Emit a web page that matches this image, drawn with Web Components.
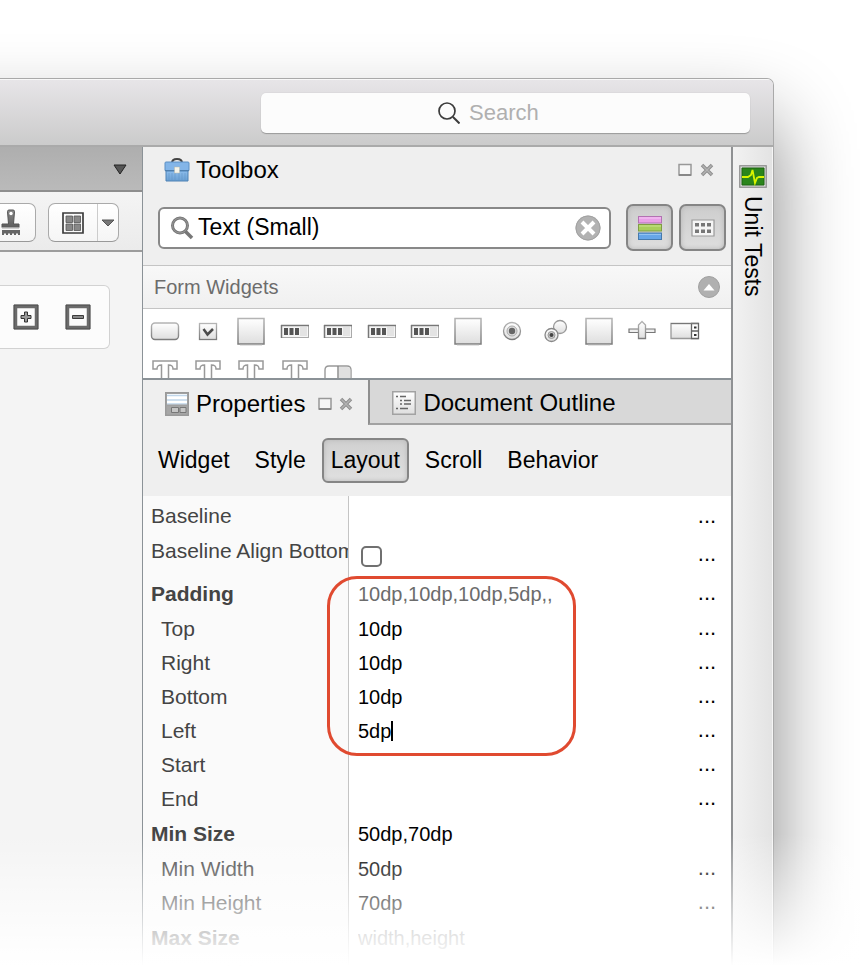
<!DOCTYPE html>
<html lang="en">
<head>
<meta charset="utf-8">
<title>Designer</title>
<style>
  body { margin: 0; background: #fff; font-family: "Liberation Sans", Arial, sans-serif; color: #000; }
</style>
</head>
<body>
<app-window>
  <title-bar slot="title"></title-bar>
  <canvas-pane slot="left"></canvas-pane>
  <tool-box></tool-box>
  <tab-strip></tab-strip>
  <category-bar></category-bar>
  <property-grid>
    <prop-row label="Baseline" kind="first"></prop-row>
    <prop-row label="Baseline Align Bottom" kind="check"></prop-row>
    <call-out>
      <prop-row label="Padding" kind="group" value="10dp,10dp,10dp,5dp,," muted></prop-row>
      <prop-row label="Top" value="10dp"></prop-row>
      <prop-row label="Right" value="10dp"></prop-row>
      <prop-row label="Bottom" value="10dp"></prop-row>
      <prop-row label="Left" value="5dp" editing></prop-row>
    </call-out>
    <prop-row label="Start"></prop-row>
    <prop-row label="End"></prop-row>
    <prop-row label="Min Size" kind="group" value="50dp,70dp" plain></prop-row>
    <prop-row label="Min Width" value="50dp"></prop-row>
    <prop-row label="Min Height" value="70dp"></prop-row>
    <prop-row label="Max Size" kind="group" hint="width,height" plain></prop-row>
    <prop-row label="Max Width" plain></prop-row>
  </property-grid>
  <side-strip slot="right">Unit Tests</side-strip>
</app-window>

<script>
const RESET = `
  :host, *, *::before, *::after { box-sizing: border-box; }
  button, input { font: inherit; color: inherit; margin: 0; padding: 0; border: 0; background: none; outline: 0; }
`;
const define = (name, html, setup) => {
  const tpl = document.createElement('template');
  tpl.innerHTML = html;
  customElements.define(name, class extends HTMLElement {
    constructor() {
      super();
      this.attachShadow({ mode: 'open' }).append(tpl.content.cloneNode(true));
    }
    connectedCallback() { if (setup) setup(this, this.shadowRoot); }
  });
};

const DEFS = `<defs>
  <linearGradient id="g" x1="0" y1="0" x2="0" y2="1"><stop offset="0" stop-color="#fff"/><stop offset="1" stop-color="#dedede"/></linearGradient>
  <linearGradient id="s" x1="0" y1="0" x2="0" y2="1"><stop offset="0" stop-color="#b4b4b4"/><stop offset="1" stop-color="#7c7c7c"/></linearGradient>
  <linearGradient id="d" x1="0" y1="0" x2="0" y2="1"><stop offset="0" stop-color="#8a8a8a"/><stop offset="1" stop-color="#5a5a5a"/></linearGradient>
  <linearGradient id="b" x1="0" y1="0" x2="0" y2="1"><stop offset="0" stop-color="#8dbdec"/><stop offset="1" stop-color="#6a9fd2"/></linearGradient>
</defs>`;
const SQUARE = '<rect x="2" y="2.500" width="26" height="25.500" fill="url(#g)" stroke="url(#s)" stroke-width="1.500"/><path d="M4 29.300h22" stroke="#ddd"/>';
const BAR = '<rect x="1.500" y="9.500" width="27" height="12" fill="#f6f6f6" stroke="#aaa"/><path d="M1 9.500h28M1.500 9v13" stroke="#777" stroke-width="1.500"/><path d="M20 11h7v9h-7z" fill="#e3e3e3"/><path d="M4 12h4v7H4zM9.500 12h4v7h-4zM15 12h4v7h-4z" fill="#555"/>';
const TEE = '<path d="M3 5h24v8h-4c0-3-1-4-4.500-4v18h-7V9C8 9 7 10 7 13H3z" fill="#fff" stroke="#999" stroke-width="1.500"/>';
const ICONS = {
  search: [22, 22, '<circle cx="9" cy="9" r="8" fill="none" stroke="#3c3c3c" stroke-width="1.700"/><path d="M15 15l6.500 6.500" stroke="#3c3c3c" stroke-width="2"/>'],
  find: [24, 24, '<path d="M15 15l7 7" stroke="#777" stroke-width="3.500"/><circle cx="10" cy="9.500" r="7.500" fill="#fff" stroke="#777" stroke-width="3"/><circle cx="10" cy="9.500" r="7.500" fill="none" stroke="#999" stroke-width="1"/>'],
  clear: [26, 26, '<circle cx="13" cy="13" r="12.500" fill="#b2b2b2"/><circle cx="13" cy="13" r="12" fill="none" stroke="#a2a2a2"/><path d="M7 7l12 12M19 7L7 19" stroke="#fff" stroke-width="4"/>'],
  toolbox: [26, 24, '<path d="M8 5c0-3 2-4 5-4s5 1 5 4" fill="none" stroke="#444" stroke-width="2"/><rect x="1" y="4" width="24" height="9" rx="1" fill="#83b5e8" stroke="#5b8fc4"/><path d="M2 13h22v10H2z" fill="url(#b)" stroke="#4f82b5"/><path d="M5 15v7M8 15v7M11 15v7M15 15v7M18 15v7M21 15v7" stroke="#5b90c4" stroke-opacity=".5"/><path d="M1 12.500h24" stroke="#4f7fae"/><rect x="10.500" y="9" width="5" height="6" fill="#f5f4ea" stroke="#b9b9a9" stroke-width=".500"/>'],
  dock: [14, 14, '<path d="M1 1.500h12v10.500H1z" fill="#f6f6f6" stroke="#989898" stroke-width="1.500"/><path d="M1 12h12" stroke="#888" stroke-width="2"/>'],
  close: [14, 14, '<path d="M2 2l10 10M12 2L2 12" stroke="#8e8e8e" stroke-width="3.500"/><path d="M2.500 2.500l9 9M11.500 2.500l-9 9" stroke="#b2b2b2" stroke-width="1.500"/>'],
  layers: [26, 26, '<rect x="1.500" y="1.500" width="23" height="6.500" fill="#e9a0e8" stroke="#b272b2"/><path d="M2 3h22" stroke="#f6c8f5"/><rect x="1.500" y="9.500" width="23" height="6.500" fill="#a9cf5c" stroke="#7f9d42"/><path d="M2 11h22" stroke="#c8e48d"/><rect x="1.500" y="18" width="23" height="6.500" fill="#66a6e8" stroke="#4679ac"/><path d="M2 19.500h22" stroke="#93c3f1"/>'],
  cells: [24, 18, '<path d="M1 1h22v16H1z" fill="#f5f5f5" stroke="#999" stroke-width="1.200"/><path d="M4 4h4v3.500H4zM10 4h4v3.500h-4zM16 4h4v3.500h-4zM4 10.500h4V14H4zM10 10.500h4V14h-4zM16 10.500h4V14h-4z" fill="#777"/>'],
  up: [22, 22, '<circle cx="11" cy="11" r="10.500" fill="#b0b0b0" stroke="#a0a0a0"/><path d="M5.500 14.500L11 8l5.500 6.500z" fill="#fff"/>'],
  down: [14, 12, '<path d="M1 2h12L7 11z" fill="#555" stroke="#222"/>'],
  drop: [14, 8, '<path d="M1 1h12L7 7z" fill="#777" stroke="#555"/>'],
  brush: [20, 27, '<path d="M6.500 2.500Q6.500 1 8 1h4q1.500 0 1.500 1.500L12.500 15H18v4H1v-4h6.500z" fill="url(#d)" stroke="#555"/><circle cx="10" cy="4.500" r="1.700" fill="#fff"/><path d="M0 19h20" stroke="#f5f5f5"/><path d="M1 21h18v5h-2v-1.500h-2V26h-2v-1.500h-2V26H9v-1.500H7V26H5v-1.500H3V26H1z" fill="#666"/>'],
  grid: [22, 22, '<path d="M1 1h20v20H1z" fill="#fafafa" stroke="#3c3c3c" stroke-width="1.700"/><path d="M4 4h6.500v6.500H4zM12 4h6.500v6.500H12zM4 12h6.500v6.500H4zM12 12h6.500v6.500H12z" fill="#888" stroke="#555" stroke-width=".800"/>'],
  plus: [26, 26, '<path d="M2.500 2.500h21v21h-21z" fill="#fcfcfc" stroke="#6b6b6b" stroke-width="3.500"/><path d="M1 1h24v24H1z" fill="none" stroke="#4c4c4c"/><path d="M11.500 8h3v3.500H18v3h-3.500V18h-3v-3.500H8v-3h3.500z" fill="#999" stroke="#333"/>'],
  minus: [26, 26, '<path d="M2.500 2.500h21v21h-21z" fill="#fcfcfc" stroke="#6b6b6b" stroke-width="3.500"/><path d="M1 1h24v24H1z" fill="none" stroke="#4c4c4c"/><path d="M7.500 11.500h11v3h-11z" fill="#888" stroke="#3c3c3c"/>'],
  sheet: [24, 24, '<rect x=".750" y=".750" width="22.500" height="22.500" fill="#a6a6a6" stroke="#9a9a9a" stroke-width="1.500"/><path d="M2 2h20v11H2z" fill="#fff"/><path d="M2 3.500h20M2 8h20M2 12h20" stroke="#c0d6ea" stroke-width="1.500"/><path d="M2 13h20" stroke="#999"/><path d="M6.500 15.500h7v5h-7zM15 15.500h6v5h-6z" fill="#c5c5c5" stroke="#777"/>'],
  outline: [24, 24, '<rect x=".750" y=".750" width="22.500" height="22.500" fill="url(#g)" stroke="#a2a2a2" stroke-width="1.500"/><path d="M4 5.500h2M8 5.500h6M8 9.500h2M12 9.500h7M8 13h2M12 13h7M4 17.500h2M8 17.500h8" stroke="#666" stroke-width="1.300"/>'],
  pulse: [28, 23, '<rect x=".750" y=".750" width="26.500" height="21.500" fill="#d5d5d5" stroke="#8c8c8c" stroke-width="1.200"/><path d="M3 3h22v17H3z" fill="#2a851b" stroke="#1d6411"/><path d="M3 12h6l3-2 1.500-5L16 18l2-5 2-1h5" fill="none" stroke="#d8f400" stroke-width="1.800"/>'],
  wbutton: [30, 30, '<rect x="1.500" y="7" width="27" height="16.500" rx="3.500" fill="url(#g)" stroke="url(#s)" stroke-width="1.400"/>'],
  wcheck: [30, 30, '<rect x="6.500" y="7.500" width="17" height="16" fill="url(#g)" stroke="url(#s)" stroke-width="1.300"/><path d="M10.500 13l4 5.500 5.500-5.500" fill="none" stroke="#4c4c4c" stroke-width="2.500"/>'],
  wsquare: [30, 30, SQUARE],
  wbar: [30, 30, BAR],
  wradio: [30, 30, '<circle cx="15" cy="15" r="8.500" fill="url(#g)" stroke="url(#s)" stroke-width="1.300"/><circle cx="15" cy="15" r="5" fill="#ddd" stroke="#aaa"/><circle cx="15" cy="15" r="3.200" fill="#666"/>'],
  wradios: [30, 30, '<circle cx="20" cy="11" r="6.500" fill="url(#g)" stroke="#999" stroke-width="1.300"/><circle cx="11.500" cy="19" r="6.500" fill="url(#g)" stroke="#888" stroke-width="1.300"/><circle cx="11.500" cy="19" r="3.500" fill="#ccc" stroke="#999"/><circle cx="11.500" cy="19" r="2" fill="#444"/>'],
  wslider: [30, 30, '<path d="M2 13h26v3.500H2z" fill="#eee" stroke="#777" stroke-width="1.200"/><path d="M11.500 22.500V9L15 5.500 18.500 9v13.500z" fill="url(#g)" stroke="url(#s)" stroke-width="1.300"/>'],
  wspin: [30, 30, '<path d="M1 7.500h27v15H1z" fill="url(#g)" stroke="#999" stroke-width="1.300"/><path d="M21.500 7.500h7v15h-7zM21.500 15h7" fill="#fff" stroke="#666" stroke-width="1.300"/><path d="M24 10.500h2.500v2H24zM24 18h2.500v2H24z" fill="#333"/><path d="M1 7.500h27" stroke="#777"/>'],
  wtext: [30, 30, TEE],
  wsplit: [30, 30, '<path d="M2 28V14q0-4 4-4h18q4 0 4 4v14z" fill="#fff" stroke="#999" stroke-width="1.400"/><path d="M15.500 11H24q3.300 0 3.300 3v14H15.500z" fill="#e0e0e0"/><path d="M15 10v18" stroke="#888" stroke-width="1.400"/>']
};

define('ui-icon', `<style>:host{display:block;flex:none;line-height:0} svg{display:block}</style>`, (el, root) => {
  if (root.querySelector('svg')) return;
  const [w, h, body] = ICONS[el.getAttribute('name')];
  const box = document.createElement('div');
  box.innerHTML = `<svg width="${w}" height="${h}" viewBox="0 0 ${w} ${h}" aria-hidden="true">${DEFS}${body}</svg>`;
  root.append(box);
});

define('app-window', `<style>${RESET}
  :host { display: block; position: relative; height: 100vh; overflow: hidden; padding: 78px 86px 0 0; }
  .window { height: 100vh; margin-left: -120px; padding-left: 120px; display: flex; flex-direction: column;
    border: 1px solid #a9a9a9; border-left: 0; border-radius: 7px; overflow: hidden; background: #efefef;
    box-shadow: 0 44px 80px rgba(0,0,0,.48); }
  .body { display: flex; flex: 1; min-height: 0; }
  main { flex: 1; min-width: 0; display: flex; flex-direction: column; border-left: 1px solid #8b9297; border-right: 2px solid #8f9193; }
  .fade { position: absolute; left: 0; right: 0; bottom: 0; height: 136px; pointer-events: none;
    background: linear-gradient(rgba(255,255,255,0), #fff 97%); }
</style>
<div class="window"><slot name="title"></slot>
  <div class="body"><slot name="left"></slot><main><slot></slot></main><slot name="right"></slot></div>
</div><div class="fade"></div>`);

define('title-bar', `<style>${RESET}
  :host { display: flex; flex: none; padding: 13px 23px 12px 261px; border-bottom: 2px solid #aaa; border-top: 1px solid #f8f8f8;
    background: linear-gradient(#e7e5e8, #cbcbcb); }
  label { flex: 1; height: 40px; display: flex; align-items: center; justify-content: center; gap: 9px; background: #fcfcfc;
    border-radius: 5px; box-shadow: 0 1px 1px #999, 0 -1px 0 #dcdadd; font-size: 22px; }
  input { width: 104px; height: 36px; appearance: none; }
  input::placeholder { color: #b0b0b0; opacity: 1; }
</style><label><ui-icon name="search"></ui-icon><input type="search" aria-label="Search" placeholder="Search"></label>`);

define('canvas-pane', `<style>${RESET}
  :host { display: flex; flex-direction: column; flex: none; width: 142px; background: #f4f4f4; }
  .head { display: flex; justify-content: flex-end; padding: 16px 15px; height: 45px; border-bottom: 2px solid #8e8e8e;
    background: linear-gradient(#aeaeae, #bababa); }
  .bar { display: flex; justify-content: flex-end; gap: 12px; height: 60px; padding: 11px 23px 0 0; border-bottom: 2px solid #9c9c9c;
    background: linear-gradient(#f4f4f4, #ebebeb); }
  .btn { height: 39px; display: flex; border: 1px solid #aaa; border-bottom-color: #999; border-radius: 7px; background: linear-gradient(#fff, #f5f5f5); }
  .btn button { display: grid; place-items: center; }
  .brush { width: 36px; border-left: 0; border-radius: 0 7px 7px 0; padding-left: 1px; }
  .split { width: 72px; }
  .split button:first-child { width: 49px; border-right: 1px solid #ccc; }
  .split button:last-child { flex: 1; }
  .zoom { margin: 33px 32px 0 0; height: 64px; display: flex; align-items: center; justify-content: flex-end; gap: 26px; padding-right: 18px;
    border: 1px solid #d2d2d2; border-left: 0; border-radius: 0 6px 6px 0; background: #fcfcfc; }
</style>
<div class="head"><button aria-label="Panel menu"><ui-icon name="down"></ui-icon></button></div>
<div class="bar"><div class="btn brush"><button aria-label="Brush"><ui-icon name="brush"></ui-icon></button></div>
<div class="btn split"><button aria-label="Grid"><ui-icon name="grid"></ui-icon></button><button aria-label="Grid options"><ui-icon name="drop"></ui-icon></button></div></div>
<div class="zoom"><button aria-label="Zoom in"><ui-icon name="plus"></ui-icon></button><button aria-label="Zoom out"><ui-icon name="minus"></ui-icon></button></div>`);

const WIDGETS = ['wbutton','wcheck','wsquare','wbar','wbar','wbar','wbar','wsquare','wradio','wradios','wsquare','wslider','wspin','wtext','wtext','wtext','wtext','wsplit'];
define('tool-box', `<style>${RESET}
  :host { display: block; flex: none; }
  header { height: 46px; display: flex; align-items: center; gap: 6px; padding: 0 17px 0 21px; font-size: 24px; }
  header span { flex: 1; }
  header button + button { margin-left: 2px; }
  .find { display: flex; align-items: center; gap: 6px; padding: 11px 5px 14px 15px; }
  .field { flex: 1; min-width: 0; height: 42px; display: flex; align-items: center; gap: 4px; margin-right: 9px; padding: 0 8px 0 10px;
    border: 2px solid #888; border-radius: 6px; background: #fff; font-size: 23px; }
  .field input { flex: 1; min-width: 0; height: 36px; }
  .toggle { width: 47px; height: 47px; display: grid; place-items: center; border: 2px solid #858585; border-radius: 7px;
    background: linear-gradient(#cdcdcd, #dedede); box-shadow: inset 0 0 5px #b5b5b5; }
  .section { height: 44px; display: flex; align-items: center; justify-content: space-between; padding: 0 11px; font-size: 20px; color: #6c6c6c;
    border-top: 1px solid #c4c4c4; border-bottom: 1px solid #c4c4c4; background: linear-gradient(#f8f8f8, #f0f0f0); }
  .widgets { height: 69px; overflow: hidden; display: grid; grid-template-columns: repeat(13, 1fr); grid-auto-rows: 40px; padding: 2px 24px 0 0; background: #fff; }
  .widgets button { display: grid; place-items: center; }
</style>
<header><ui-icon name="toolbox"></ui-icon><span>Toolbox</span><button aria-label="Dock"><ui-icon name="dock"></ui-icon></button><button aria-label="Close"><ui-icon name="close"></ui-icon></button></header>
<div class="find"><label class="field"><ui-icon name="find"></ui-icon><input type="text" aria-label="Filter widgets" value="Text (Small)"><button aria-label="Clear"><ui-icon name="clear"></ui-icon></button></label>
<button class="toggle" aria-label="Show categories"><ui-icon name="layers"></ui-icon></button><button class="toggle" aria-label="Compact mode"><ui-icon name="cells"></ui-icon></button></div>
<div class="section"><span>Form Widgets</span><button aria-label="Collapse"><ui-icon name="up"></ui-icon></button></div>
<div class="widgets">${WIDGETS.map(n => `<button aria-label="Widget"><ui-icon name="${n}"></ui-icon></button>`).join('')}</div>`);

define('tab-strip', `<style>${RESET}
  :host { display: flex; flex: none; height: 47px; border-top: 2px solid #8b9297; font-size: 24px; }
  .tab { display: flex; align-items: center; gap: 7px; padding: 2px 15px 0 22px; }
  .tab > button:first-child { display: flex; align-items: center; gap: 7px; }
  .tab .dock { margin-left: 6px; }
  .off { flex: 1; border-left: 2px solid #8f8f8f; border-bottom: 2px solid #a2a2a2; background: #d8d8d8; }
</style>
<div class="tab"><button><ui-icon name="sheet"></ui-icon>Properties</button><button class="dock" aria-label="Dock"><ui-icon name="dock"></ui-icon></button><button aria-label="Close"><ui-icon name="close"></ui-icon></button></div>
<div class="tab off"><button><ui-icon name="outline"></ui-icon>Document Outline</button></div>`);

define('category-bar', `<style>${RESET}
  :host { display: flex; flex: none; gap: 7px; padding: 13px 6px; font-size: 23px; }
  button { height: 45px; padding: 0 7px; border: 2px solid transparent; border-radius: 6px; }
  .on { border-color: #858585; background: linear-gradient(#d0d0d0, #e0e0e0); box-shadow: inset 0 0 5px #b8b8b8; }
</style><button>Widget</button><button>Style</button><button class="on">Layout</button><button>Scroll</button><button>Behavior</button>`);

define('property-grid', `<style>
  :host { display: block; flex: 1; padding-top: 3px; background: linear-gradient(to right, #fafafa 205px, #c4c4c4 205px 206px, #fff 206px); }
</style><slot></slot>`);

define('call-out', `<style>
  :host { display: block; position: relative; }
  i { position: absolute; box-sizing: border-box; left: 184px; top: 0; width: 249px; bottom: -8px; border: 3px solid #e04a30; border-radius: 30px; pointer-events: none; }
</style><slot></slot><i></i>`);

define('prop-row', `<style>${RESET}
  :host { display: grid; grid-template-columns: 205px 1fr 48px; height: 34px; line-height: 34px; font-size: 20px; }
  :host([kind="first"]) { height: 35px; }
  :host([kind="check"]) { height: 42px; }
  :host([kind="group"]) { height: 36px; line-height: 36px; }
  label { padding-left: 18px; font-size: 21px; color: #444; white-space: nowrap; overflow: hidden; }
  :host([kind]) label { padding-left: 8px; }
  :host([kind="group"]) label { font-weight: bold; }
  .value { display: flex; align-items: center; padding-left: 10px; min-width: 0; }
  input[type=text] { flex: 1; min-width: 0; height: 32px; }
  :host([muted]) input { color: #6c6c6c; }
  input::placeholder { color: #888; opacity: 1; }
  :host([editing]) input { flex: none; field-sizing: content; }
  .caret { width: 2px; height: 20px; background: #000; }
  input[type=checkbox] { appearance: none; width: 21px; height: 21px; margin: 3px 0 0 3px; border: 2px solid #707070; border-radius: 5px; background: #fff; }
  button { font-size: 22px; line-height: 32px; padding-bottom: 2px; }
</style><label for="v"></label><div class="value"><input id="v" type="text"></div>`, (el, root) => {
  if (el.ready) return;
  el.ready = true;
  root.querySelector('label').textContent = el.getAttribute('label');
  const input = root.querySelector('input');
  if (el.getAttribute('kind') === 'check') input.type = 'checkbox';
  else {
    input.value = el.getAttribute('value') || '';
    input.placeholder = el.getAttribute('hint') || '';
  }
  if (el.hasAttribute('editing')) {
    const caret = document.createElement('span');
    caret.className = 'caret';
    root.querySelector('.value').append(caret);
  }
  if (!el.hasAttribute('plain')) {
    const more = document.createElement('button');
    more.textContent = '...';
    more.setAttribute('aria-label', 'Edit ' + el.getAttribute('label'));
    root.append(more);
  }
});

define('side-strip', `<style>${RESET}
  :host { display: block; flex: none; width: 40px; padding-top: 18px; background: linear-gradient(to right, #f2f2f2, #e3e3e3); border-right: 1px solid #f5f5f5; font-size: 23px; }
  button { width: 100%; display: flex; flex-direction: column; align-items: center; gap: 8px; }
  span { writing-mode: vertical-rl; line-height: 26px; }
</style><button><ui-icon name="pulse"></ui-icon><span><slot></slot></span></button>`);
</script>
</body>
</html>
